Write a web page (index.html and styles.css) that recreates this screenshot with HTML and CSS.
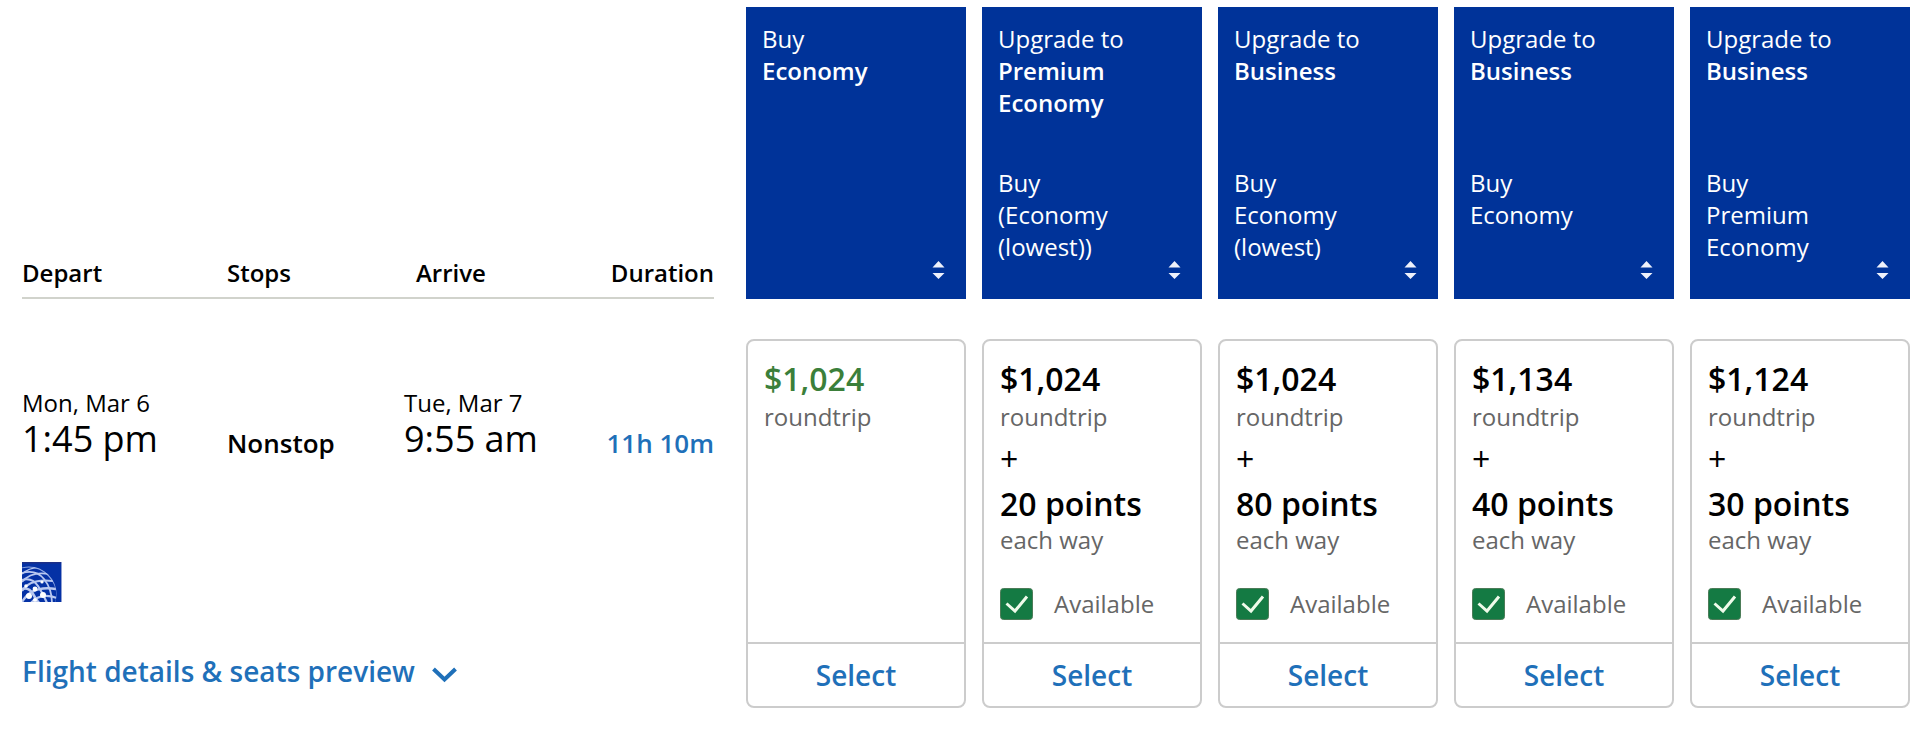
FILE: index.html
```html
<!DOCTYPE html>
<html lang="en">
<head>
<meta charset="utf-8">
<meta name="viewport" content="width=device-width, initial-scale=1">
<title>Flight fares</title>
<link rel="stylesheet" href="styles.css">
</head>
<body>
<svg class="defs" aria-hidden="true">
  <symbol id="sort" viewBox="0 0 13 18"><path d="M6.5 0 12.5 6.5H.5ZM.5 12H12.5L6.5 18Z" fill="#eef1fb"/></symbol>
  <symbol id="check" viewBox="0 0 33 32"><rect x=".5" y=".5" width="32" height="31" rx="3" fill="#147a43" stroke="#4c7c58"/><path d="M6.500 15.500 15 23 27 8.500" fill="none" stroke="#effbea" stroke-width="3"/></symbol>
</svg>
<main>
<table class="results">
  <thead>
    <tr>
      <th class="heading" scope="col">Depart</th>
      <th class="heading" scope="col">Stops</th>
      <th class="heading heading-arrive" scope="col">Arrive</th>
      <th class="heading heading-duration" scope="col">Duration</th>
      <th class="fare-head" scope="col"><button class="sort" type="button"><span class="sort-text"><span class="cabin">Buy<br><b>Economy</b></span></span><svg class="sort-icon" aria-hidden="true"><use href="#sort"/></svg></button></th>
      <th class="fare-head" scope="col"><button class="sort" type="button"><span class="sort-text"><span class="cabin">Upgrade to <b>Premium Economy</b></span><span class="base">Buy<br>(Economy (lowest))</span></span><svg class="sort-icon" aria-hidden="true"><use href="#sort"/></svg></button></th>
      <th class="fare-head" scope="col"><button class="sort" type="button"><span class="sort-text"><span class="cabin">Upgrade to <b>Business</b></span><span class="base">Buy<br>Economy (lowest)</span></span><svg class="sort-icon" aria-hidden="true"><use href="#sort"/></svg></button></th>
      <th class="fare-head" scope="col"><button class="sort" type="button"><span class="sort-text"><span class="cabin">Upgrade to <b>Business</b></span><span class="base">Buy<br>Economy</span></span><svg class="sort-icon" aria-hidden="true"><use href="#sort"/></svg></button></th>
      <th class="fare-head" scope="col"><button class="sort" type="button"><span class="sort-text"><span class="cabin">Upgrade to <b>Business</b></span><span class="base">Buy<br>Premium Economy</span></span><svg class="sort-icon" aria-hidden="true"><use href="#sort"/></svg></button></th>
    </tr>
  </thead>
  <tbody>
    <tr>
      <td class="info"><div class="date">Mon, Mar 6</div><div class="time">1:45 pm</div></td>
      <td class="info stops">Nonstop</td>
      <td class="info"><div class="date">Tue, Mar 7</div><div class="time">9:55 am</div></td>
      <td class="info duration"><a class="link" href="#details">11h 10m</a></td>
      <td class="fare">
        <div class="fare-body"><div class="price best">$1,024</div><div class="note">roundtrip</div></div>
        <button class="select" type="button">Select</button>
      </td>
      <td class="fare">
        <div class="fare-body"><div class="price">$1,024</div><div class="note">roundtrip</div><div class="plus">+</div><div class="price">20 points</div><div class="note way">each way</div><div class="status"><svg class="check" aria-hidden="true"><use href="#check"/></svg>Available</div></div>
        <button class="select" type="button">Select</button>
      </td>
      <td class="fare">
        <div class="fare-body"><div class="price">$1,024</div><div class="note">roundtrip</div><div class="plus">+</div><div class="price">80 points</div><div class="note way">each way</div><div class="status"><svg class="check" aria-hidden="true"><use href="#check"/></svg>Available</div></div>
        <button class="select" type="button">Select</button>
      </td>
      <td class="fare">
        <div class="fare-body"><div class="price">$1,134</div><div class="note">roundtrip</div><div class="plus">+</div><div class="price">40 points</div><div class="note way">each way</div><div class="status"><svg class="check" aria-hidden="true"><use href="#check"/></svg>Available</div></div>
        <button class="select" type="button">Select</button>
      </td>
      <td class="fare">
        <div class="fare-body"><div class="price">$1,124</div><div class="note">roundtrip</div><div class="plus">+</div><div class="price">30 points</div><div class="note way">each way</div><div class="status"><svg class="check" aria-hidden="true"><use href="#check"/></svg>Available</div></div>
        <button class="select" type="button">Select</button>
      </td>
    </tr>
    <tr>
      <td class="footer" colspan="4" id="details">
        <svg class="logo" viewBox="0 0 40 40" role="img" aria-label="Airline">
          <defs>
            <clipPath id="globe"><circle cx="7" cy="32" r="27.500"/></clipPath>
            <filter id="soft"><feGaussianBlur stdDeviation=".6"/></filter>
          </defs>
          <path d="M0 0H40V40H0Z" fill="#0431a5"/>
          <path d="M0 0H40V1.500H0Z" fill="#1c2f86"/>
          <g clip-path="url(#globe)" filter="url(#soft)" fill="none" stroke="#b9c8f0">
            <path d="M0 5.500Q16 2 27 14T34 40" stroke-width="1.500" stroke="#8fa8e4"/>
            <path d="M0 11Q14 7 22 17T30 41" stroke-width="1.800"/>
            <path d="M0 18Q10 15 16 24T25 41" stroke-width="2.200"/>
            <path d="M0 27Q7 25 11 32T17 41" stroke-width="2.600"/>
            <path d="M0 12Q9 4 20 6" stroke-width="1.400"/>
            <path d="M0 20Q9 9 27 12" stroke-width="1.700"/>
            <path d="M0 29Q8 16 31 19" stroke-width="2"/>
            <path d="M0 40Q10 23 34 27" stroke-width="2.400"/>
            <path d="M9 41Q18 30 35 36" stroke-width="2.200"/>
            <g fill="#fff" stroke="none"><circle cx="7" cy="34" r="3"/><circle cx="13" cy="27" r="2.400"/><circle cx="21" cy="33" r="3"/><circle cx="13" cy="38" r="2"/><circle cx="4" cy="24" r="1.800"/><circle cx="20" cy="20" r="1.600"/></g>
          </g>
          <path d="M39 0H40V40H39Z" fill="#8f9fd2"/>
        </svg>
        <button class="details" type="button">Flight details &amp; seats preview
          <svg class="chevron" viewBox="0 0 25 16" aria-hidden="true"><path d="M1.500 2 12.500 12.500 23.500 2" fill="none" stroke="currentColor" stroke-width="4"/></svg>
        </button>
      </td>
    </tr>
  </tbody>
</table>
</main>
</body>
</html>
```
FILE: styles.css
```css
* {
  box-sizing: border-box;
}

body {
  margin: 0;
  background: #fff;
  color: #000;
  font: 24px/32px "Open Sans", "Noto Sans", sans-serif;
}

button {
  margin: 0;
  padding: 0;
  border: 0;
  background: none;
  color: inherit;
  font: inherit;
  text-align: left;
  cursor: pointer;
}

.defs {
  display: none;
}

.results {
  display: grid;
  grid-template-columns: 205fr 177fr 150fr 160fr 16px repeat(5, 236fr);
  padding: 7px 12px 24px 22px;
}

.results thead,
.results tbody,
.results tr {
  display: contents;
}

.results th,
.results td {
  padding: 0;
  text-align: left;
}

.results .heading {
  display: flex;
  align-items: flex-end;
  margin-bottom: 40px;
  padding-bottom: 8px;
  border-bottom: 2px solid #d1d3cc;
  font-weight: 600;
}

.results .heading-arrive {
  padding-left: 12px;
}

.results .heading-duration {
  justify-content: flex-end;
}

.fare-head,
.fare {
  display: flex;
  margin-left: 16px;
}

.fare-head:nth-child(5),
.fare:nth-child(5) {
  grid-column: 6;
}

.fare-head:nth-child(6),
.fare:nth-child(6) {
  grid-column: 7;
}

.fare-head:nth-child(7),
.fare:nth-child(7) {
  grid-column: 8;
}

.fare-head:nth-child(8),
.fare:nth-child(8) {
  grid-column: 9;
}

.fare-head:nth-child(9),
.fare:nth-child(9) {
  grid-column: 10;
}

.fare-head {
  margin-bottom: 40px;
  background: #039;
  color: #fff;
  font-weight: 400;
}

.sort {
  display: flex;
  flex: 1;
  padding: 16px 21px 20px 16px;
}

.sort-text {
  display: flex;
  flex: 1;
  flex-direction: column;
  gap: 48px;
  align-self: flex-start;
  padding-bottom: 16px;
}

.cabin,
.base {
  display: block;
  min-height: 96px;
}

.cabin b {
  display: block;
  font-weight: 600;
}

.sort-icon {
  width: 13px;
  height: 18px;
  align-self: flex-end;
}

.info {
  align-self: end;
}

.results .info {
  padding-top: 48px;
}

.time {
  font-size: 36px;
  line-height: 40px;
}

.stops,
.duration {
  font-size: 26px;
  font-weight: 600;
}

.results .duration {
  text-align: right;
}

.link,
.details,
.select {
  color: #1f70b9;
  text-decoration: none;
}

.fare {
  flex-direction: column;
  grid-row: 2 / span 2;
  border: 2px solid #ccc;
  border-radius: 8px;
}

.fare-body {
  flex: 1;
  padding: 18px 16px 22px;
}

.price {
  font-size: 32px;
  font-weight: 600;
  line-height: 40px;
}

.best {
  color: #3b7f3a;
}

.note {
  padding-top: 2px;
  color: #666;
}

.plus {
  margin: 6px 0 5px;
  font-size: 32px;
  line-height: 40px;
}

.way {
  padding-top: 0;
}

.status {
  display: flex;
  gap: 21px;
  margin-top: 32px;
  color: #666;
}

.check {
  width: 33px;
  height: 32px;
}

.select {
  padding: 13px 0;
  border-top: 2px solid #ccc;
  font-size: 28px;
  font-weight: 600;
  line-height: 36px;
  text-align: center;
}

.footer {
  display: flex;
  flex-direction: column;
  grid-row: 3;
  grid-column: 1 / 5;
  align-items: flex-start;
  gap: 51px;
}

.results .footer {
  padding: 103px 0 19px;
}

.logo {
  width: 40px;
  height: 40px;
}

.details {
  display: flex;
  align-items: center;
  gap: 17px;
  font-size: 28px;
  font-weight: 600;
  line-height: 36px;
}

.chevron {
  width: 25px;
  height: 16px;
  margin-top: 8px;
}
```
